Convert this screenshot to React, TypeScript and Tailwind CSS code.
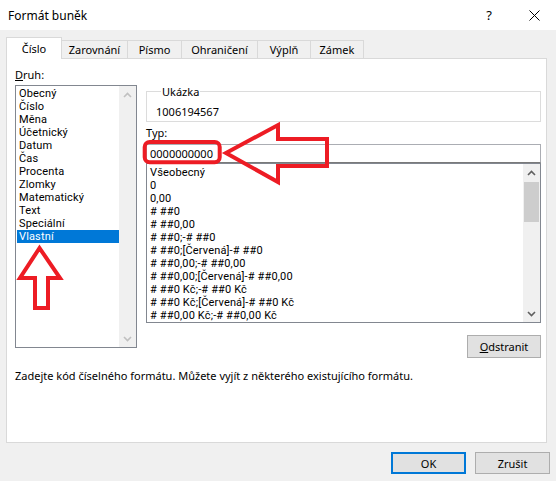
import React from "react";

const kinds = [
  "Obecný",
  "Číslo",
  "Měna",
  "Účetnický",
  "Datum",
  "Čas",
  "Procenta",
  "Zlomky",
  "Matematický",
  "Text",
  "Speciální",
  "Vlastní",
];

const types = [
  "Všeobecný",
  "0",
  "0,00",
  "# ##0",
  "# ##0,00",
  "# ##0;-# ##0",
  "# ##0;[Červená]-# ##0",
  "# ##0,00;-# ##0,00",
  "# ##0,00;[Červená]-# ##0,00",
  "# ##0 Kč;-# ##0 Kč",
  "# ##0 Kč;[Červená]-# ##0 Kč",
  "# ##0,00 Kč;-# ##0,00 Kč",
];

function Chevron({ up, color }: { up: boolean; color: string }) {
  return (
    <svg width="9" height="6" viewBox="0 0 9 6">
      <polyline
        points={up ? "1,5 4.5,1.5 8,5" : "1,1 4.5,4.5 8,1"}
        fill="none"
        stroke={color}
        strokeWidth="1.6"
      />
    </svg>
  );
}

function ScrollBar({ enabled, thumb }: { enabled: boolean; thumb: boolean }) {
  const color = enabled ? "#606060" : "#c0c0c0";
  return (
    <div className="w-[17px] h-full bg-[#f0f0f0] flex flex-col shrink-0">
      <div className="h-[17px] flex items-center justify-center shrink-0">
        <Chevron up color={color} />
      </div>
      <div className="flex-1 flex flex-col">
        {thumb && <div className="mt-[1px] h-[40px] mx-[1px] bg-[#cdcdcd]" />}
      </div>
      <div className="h-[17px] flex items-center justify-center shrink-0">
        <Chevron up={false} color={color} />
      </div>
    </div>
  );
}

export default function App() {
  return (
    <div className="relative w-[556px] h-[481px] bg-[#f0f0f0] text-black text-[11px] leading-[13px] overflow-hidden font-['Noto_Sans',sans-serif]">
      {/* title bar */}
      <div className="h-[30px] bg-white flex items-center">
        <div className="flex-1 pl-[8px] text-[12px]">Formát buněk</div>
        <div className="w-[46px] flex justify-center text-[13px]">?</div>
        <div className="w-[44px] flex justify-center">
          <svg width="11" height="11" viewBox="0 0 11 11">
            <line x1="0.5" y1="0.5" x2="10.5" y2="10.5" stroke="#000" strokeWidth="1" />
            <line x1="10.5" y1="0.5" x2="0.5" y2="10.5" stroke="#000" strokeWidth="1" />
          </svg>
        </div>
      </div>

      {/* tabs */}
      <div className="relative z-10 pt-[7px] pl-[6px] flex items-end">
        <div className="w-[56px] h-[22px] -mb-px bg-white border-l border-t border-r border-[#d9d9d9] flex items-center justify-center pb-[1px]">
          Číslo
        </div>
        <div className="w-[66px] h-[18px] border-t border-r border-[#d9d9d9] flex items-center justify-center">
          Zarovnání
        </div>
        <div className="w-[54px] h-[18px] border-t border-r border-[#d9d9d9] flex items-center justify-center">
          Písmo
        </div>
        <div className="w-[76px] h-[18px] border-t border-r border-[#d9d9d9] flex items-center justify-center">
          Ohraničení
        </div>
        <div className="w-[53px] h-[18px] border-t border-r border-[#d9d9d9] flex items-center justify-center">
          Výplň
        </div>
        <div className="w-[53px] h-[18px] border-t border-r border-[#d9d9d9] flex items-center justify-center">
          Zámek
        </div>
      </div>

      {/* panel */}
      <div className="ml-[6px] w-[541px] h-[385px] bg-white border border-[#d9d9d9] pl-[8px] pt-[8px] flex flex-col">
        <div className="leading-[16px]">
          <span className="underline">D</span>ruh:
        </div>
        <div className="mt-[2px] flex gap-[9px] items-start">
          {/* left list */}
          <div className="w-[122px] h-[263px] border border-[#828790] flex">
            <div className="flex-1 pt-[1px] pl-[1px] font-['Roboto',sans-serif] tracking-[0.15px]">
              {kinds.map((k) => (
                <div
                  key={k}
                  className={
                    k === "Vlastní"
                      ? "h-[13px] pl-[2px] bg-[#0078d7] text-white"
                      : "h-[13px] pl-[2px]"
                  }
                >
                  {k}
                </div>
              ))}
            </div>
            <ScrollBar enabled={false} thumb={false} />
          </div>

          {/* right column */}
          <div className="w-[395px] flex flex-col">
            <fieldset className="border border-[#dcdcdc] pl-[9px] pb-[3px]">
              <legend className="ml-[5px] px-[1px] leading-[13px]">Ukázka</legend>
              <div className="mt-[7px]">1006194567</div>
            </fieldset>
            <div className="mt-[4px]">Typ:</div>
            <div className="mt-[5px] h-[19px] border border-[#abadb3] border-b-[#7a7a7a] pl-[3px] leading-[17px]">
              0000000000
            </div>
            <div className="h-[160px] border border-[#828790] flex overflow-hidden">
              <div className="flex-1 pt-[2px] pl-[3px] overflow-hidden font-['Roboto',sans-serif] tracking-[0.15px]">
                {types.map((t) => (
                  <div key={t} className="h-[13px] whitespace-nowrap">
                    {t}
                  </div>
                ))}
              </div>
              <ScrollBar enabled thumb />
            </div>
            <button className="mt-[12px] self-end w-[74px] h-[23px] border border-[#adadad] bg-[#e1e1e1] flex items-center justify-center">
              <span>
                <span className="underline">O</span>dstranit
              </span>
            </button>
          </div>
        </div>
        <div className="mt-[11px]">
          Zadejte kód číselného formátu. Můžete vyjít z některého existujícího formátu.
        </div>
      </div>

      {/* bottom buttons */}
      <div className="mt-[9px] pr-[6px] flex justify-end gap-[9px]">
        <button className="w-[75px] h-[22px] border-2 border-[#0078d7] bg-[#e1e1e1] flex items-center justify-center">
          OK
        </button>
        <button className="w-[75px] h-[22px] border border-[#adadad] bg-[#e1e1e1] flex items-center justify-center">
          Zrušit
        </button>
      </div>

      {/* red annotations */}
      <svg
        className="absolute left-0 top-0 pointer-events-none"
        width="556"
        height="481"
        viewBox="0 0 556 481"
      >
        <polygon
          points="39.5,248 20,278 35,278 35,308 48,308 48,278 60,278"
          fill="none"
          stroke="#ed1c24"
          strokeWidth="4"
          strokeLinejoin="miter"
        />
        <rect
          x="144.7"
          y="142"
          width="75"
          height="20.3"
          rx="5"
          fill="none"
          stroke="#ed1c24"
          strokeWidth="4"
        />
        <polygon
          points="226,153 278,125 278,139 327,139 327,166 278,166 278,182"
          fill="none"
          stroke="#ed1c24"
          strokeWidth="4"
          strokeLinejoin="miter"
        />
      </svg>
    </div>
  );
}
